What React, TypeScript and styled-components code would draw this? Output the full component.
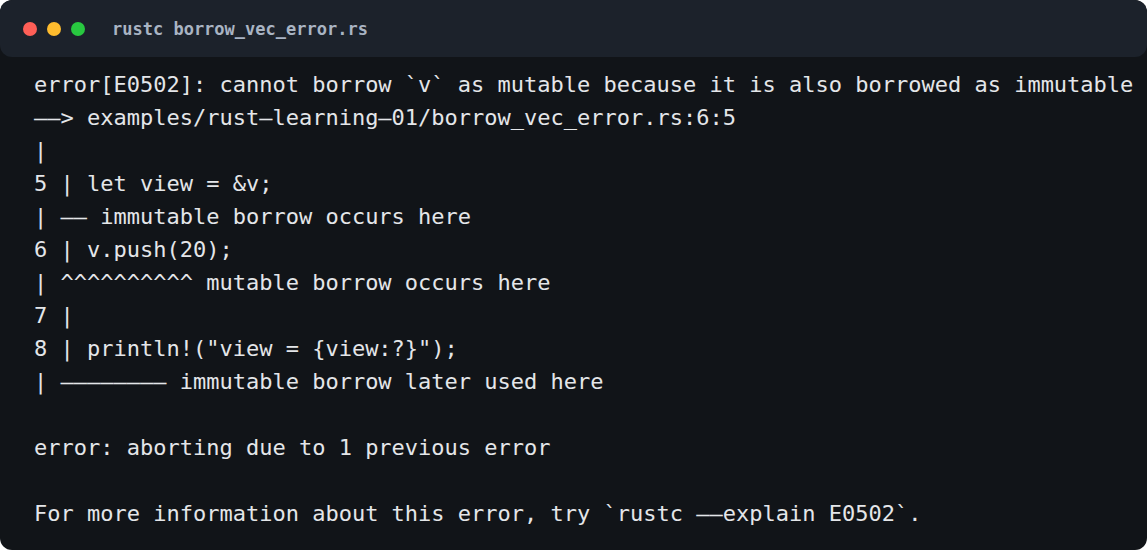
import React from "react";
import styled, { createGlobalStyle } from "styled-components";

const Global = createGlobalStyle`
  html, body { margin: 0; padding: 0; background: #ffffff; }
  #root { width: 1147px; height: 550px; }
`;

const Window = styled.div`
  width: 1147px;
  height: 550px;
  box-sizing: border-box;
  background: #111418;
  border-radius: 12px;
  overflow: hidden;
  display: flex;
  flex-direction: column;
`;

const TitleBar = styled.div`
  height: 57px;
  flex: 0 0 57px;
  background: #1c222b;
  border-radius: 12px;
  display: flex;
  align-items: center;
  padding-left: 23px;
  box-sizing: border-box;
`;

const Dots = styled.div`
  display: flex;
  gap: 10px;
  margin-right: 27px;
`;

const Dot = styled.span<{ $color: string }>`
  width: 14px;
  height: 14px;
  border-radius: 50%;
  background: ${(p) => p.$color};
`;

const Title = styled.div`
  font-family: "DejaVu Sans Mono", monospace;
  font-weight: bold;
  font-size: 17px;
  color: #a9b4c3;
`;

const Output = styled.pre`
  margin: 0;
  padding: 11px 35px 20px 34px;
  font-family: "DejaVu Sans Mono", monospace;
  font-size: 22px;
  line-height: 33px;
  color: #e4e6e9;
  white-space: pre;
`;

const lines = [
  "error[E0502]: cannot borrow `v` as mutable because it is also borrowed as immutable",
  "\u2013\u2013> examples/rust\u2013learning\u201301/borrow_vec_error.rs:6:5",
  "|",
  "5 | let view = &v;",
  "| \u2013\u2013 immutable borrow occurs here",
  "6 | v.push(20);",
  "| ^^^^^^^^^^ mutable borrow occurs here",
  "7 |",
  '8 | println!("view = {view:?}");',
  "| \u2013\u2013\u2013\u2013\u2013\u2013\u2013\u2013 immutable borrow later used here",
  "",
  "error: aborting due to 1 previous error",
  "",
  "For more information about this error, try `rustc \u2013\u2013explain E0502`.",
];

export default function App() {
  return (
    <>
      <Global />
      <Window>
        <TitleBar>
          <Dots>
            <Dot $color="#ff5f57" />
            <Dot $color="#febc2e" />
            <Dot $color="#28c840" />
          </Dots>
          <Title>rustc borrow_vec_error.rs</Title>
        </TitleBar>
        <Output>{lines.join("\n")}</Output>
      </Window>
    </>
  );
}
